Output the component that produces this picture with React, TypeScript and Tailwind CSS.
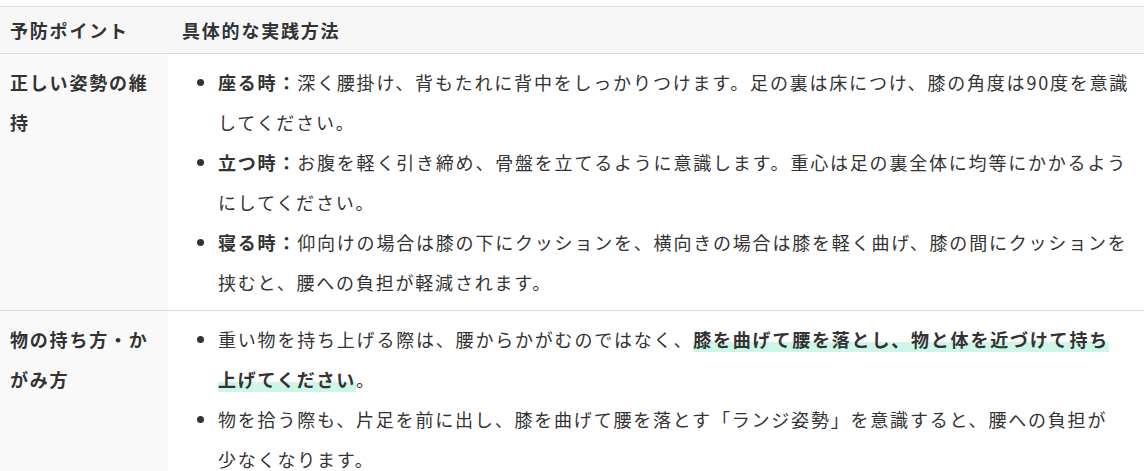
import React from "react";

const font = {
  fontFamily: '"Noto Sans CJK JP", "Noto Sans", sans-serif',
};

function Mark({ children }: { children: React.ReactNode }) {
  return (
    <strong className="font-bold bg-[linear-gradient(transparent_62%,#cdf6e8_62%)]">
      {children}
    </strong>
  );
}

export default function App() {
  return (
    <div
      className="w-[1144px] h-[471px] overflow-hidden bg-white pt-[6px] text-[18px] leading-[40px] tracking-[0.1em] text-[#333]"
      style={font}
    >
      <div className="grid grid-cols-[168px_1fr] border-t border-[#dddddd]">
        {/* header */}
        <div className="bg-[#f7f7f7] pl-[10px] pr-[10px] py-[3px] font-bold border-b border-[#dddddd]">
          予防ポイント
        </div>
        <div className="bg-[#f7f7f7] pl-[14px] pr-[10px] py-[3px] font-bold border-b border-[#dddddd]">
          具体的な実践方法
        </div>

        {/* row 1 */}
        <div className="bg-[#f9f9f9] pl-[10px] pr-[10px] py-[8px] font-bold border-b border-[#dddddd]">
          正しい姿勢の維持
        </div>
        <div className="bg-white pl-[14px] pr-[10px] py-[8px] border-b border-[#dddddd]">
          <ul className="list-disc pl-[36px]">
            <li>
              <strong className="font-bold">座る時：</strong>
              深く腰掛け、背もたれに背中をしっかりつけます。足の裏は床につけ、膝の角度は90度を意識してください。
            </li>
            <li>
              <strong className="font-bold">立つ時：</strong>
              お腹を軽く引き締め、骨盤を立てるように意識します。重心は足の裏全体に均等にかかるようにしてください。
            </li>
            <li>
              <strong className="font-bold">寝る時：</strong>
              仰向けの場合は膝の下にクッションを、横向きの場合は膝を軽く曲げ、膝の間にクッションを挟むと、腰への負担が軽減されます。
            </li>
          </ul>
        </div>

        {/* row 2 */}
        <div className="bg-[#f9f9f9] pl-[10px] pr-[10px] py-[8px] font-bold">
          物の持ち方・かがみ方
        </div>
        <div className="bg-white pl-[14px] pr-[18px] py-[8px]">
          <ul className="list-disc pl-[36px]">
            <li>
              重い物を持ち上げる際は、腰からかがむのではなく、
              <Mark>膝を曲げて腰を落とし、物と体を近づけて持ち上げてください</Mark>。
            </li>
            <li>
              物を拾う際も、片足を前に出し、膝を曲げて腰を落とす「ランジ姿勢」を意識すると、腰への負担が少なくなります。
            </li>
          </ul>
        </div>
      </div>
    </div>
  );
}
